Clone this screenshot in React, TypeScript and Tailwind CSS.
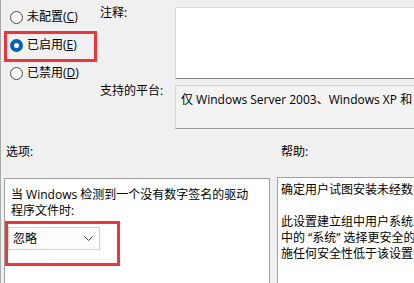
import React from 'react';

const Radio: React.FC<{ label: string; keyChar: string; checked?: boolean }> = ({ label, keyChar, checked }) => (
  <div className="h-[28px] flex items-center pl-[9px] gap-[4px]">
    {checked ? (
      <span className="w-[13px] h-[13px] rounded-full bg-[#0063b1] flex items-center justify-center">
        <span className="w-[5px] h-[5px] rounded-full bg-white"></span>
      </span>
    ) : (
      <span className="w-[13px] h-[13px] rounded-full border border-[#4d4d4d] bg-[#f7f7f7]"></span>
    )}
    <span className="whitespace-nowrap">
      {label}(<u>{keyChar}</u>)
    </span>
  </div>
);

const App: React.FC = () => {
  return (
    <div className="relative w-[414px] h-[283px] overflow-hidden bg-[#f0f0f0] border-l border-[#a8a8a8] text-[12px] leading-[16px] text-black font-['Open_Sans','Noto_Sans_CJK_SC',sans-serif]">
      {/* top section */}
      <div className="flex">
        <div className="w-[99px] shrink-0 pt-[3px]">
          <Radio label="未配置" keyChar="C" />
          <Radio label="已启用" keyChar="E" checked />
          <Radio label="已禁用" keyChar="D" />
        </div>
        <div className="flex-1 min-w-0 pt-[7px]">
          <div className="flex">
            <div className="w-[75px] shrink-0 -mt-[2px]">注释:</div>
            <div className="flex-1 min-w-0 h-[72px] bg-white border border-[#dadada] border-b-[#868686] border-r-0"></div>
          </div>
          <div className="flex mt-[6px]">
            <div className="w-[75px] shrink-0 -mt-[2px]">支持的平台:</div>
            <div className="flex-1 min-w-0 h-[44px] bg-[#f3f3f3] border border-[#d4d4d4] border-b-[#9a9a9a] border-r-0 pl-[5px] pt-[6px] whitespace-nowrap overflow-hidden">
              仅 Windows Server 2003、Windows XP 和 Windows 2000
            </div>
          </div>
        </div>
      </div>

      {/* section labels */}
      <div className="flex pt-[15px]">
        <div className="w-[276px] shrink-0 pl-[5px]">选项:</div>
        <div className="pl-[4px]">帮助:</div>
      </div>

      {/* panels */}
      <div className="flex mt-[18px] pl-[3px]">
        <div className="w-[266px] shrink-0 h-[120px] bg-white border border-[#a0a0a0] pl-[3px] pt-[8px]">
          <div className="pl-[3px]">
            当 Windows 检测到一个没有数字签名的驱动
            <br />
            程序文件时:
          </div>
          <div className="mt-[8px] w-[92px] h-[23px] bg-[#fdfdfd] border border-[#d0d0d0] flex items-center justify-between pl-[4px] pr-[6px]">
            <span>忽略</span>
            <svg width="9" height="5" viewBox="0 0 9 5" fill="none">
              <path d="M0.5 0.5 L4.5 4.5 L8.5 0.5" stroke="#444" strokeWidth="1" />
            </svg>
          </div>
        </div>
        <div className="ml-[7px] flex-1 min-w-0 h-[120px] -mt-[1px] bg-white border border-[#a0a0a0] border-r-0 pl-[3px] pt-[4px] whitespace-nowrap overflow-hidden">
          <div>确定用户试图安装未经数字签名的设备驱动程序时发生的情况。</div>
          <div>&nbsp;</div>
          <div>此设置建立组中用户系统上的最低安全响应。用户可以在控制面板</div>
          <div>中的 “系统” 选择更安全的设置，但如果启用此设置，系统不会实</div>
          <div>施任何安全性低于该设置的设置。</div>
        </div>
      </div>

      {/* red highlight boxes */}
      <div className="absolute left-[3px] top-[31px] w-[93px] h-[31px] border-[3px] border-[#e8383d]"></div>
      <div className="absolute left-[4px] top-[221px] w-[115px] h-[45px] border-[3px] border-[#e8383d]"></div>
    </div>
  );
};

export default App;
